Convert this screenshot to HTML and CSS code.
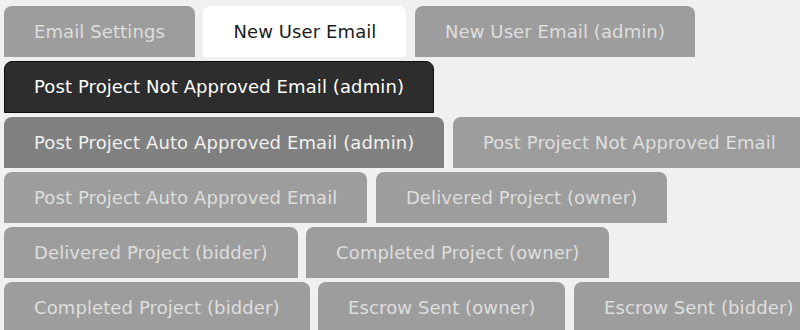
FILE: index.html
```html
<!DOCTYPE html>
<html>
<head>
<meta charset="utf-8">
<link rel="stylesheet" href="styles.css">
</head>
<body>
<div class="tabs">
  <a class="tab">Email Settings</a>
  <a class="tab tab-active">New User Email</a>
  <a class="tab">New User Email (admin)</a>
  <a class="tab tab-dark">Post Project Not Approved Email (admin)</a>
  <a class="tab tab-hover">Post Project Auto Approved Email (admin)</a>
  <a class="tab">Post Project Not Approved Email</a>
  <a class="tab">Post Project Auto Approved Email</a>
  <a class="tab">Delivered Project (owner)</a>
  <a class="tab">Delivered Project (bidder)</a>
  <a class="tab">Completed Project (owner)</a>
  <a class="tab">Completed Project (bidder)</a>
  <a class="tab">Escrow Sent (owner)</a>
  <a class="tab">Escrow Sent (bidder)</a>
</div>
</body>
</html>
```
FILE: styles.css
```css
html, body {
  margin: 0;
  padding: 0;
  overflow: hidden;
  background: #f0f0f0;
}
body {
  font-family: "DejaVu Sans", Verdana, sans-serif;
}
.tabs {
  width: 860px;
  padding: 6px 0 0 4px;
  display: flex;
  flex-wrap: wrap;
  column-gap: 8.5px;
  row-gap: 4px;
}
.tab {
  display: block;
  height: 51px;
  line-height: 51px;
  padding: 0 30px;
  box-sizing: border-box;
  border-radius: 8px 8px 0 0;
  background: #9d9d9d;
  color: #dedede;
  font-size: 18px;
  letter-spacing: 0.1px;
  white-space: nowrap;
}
.tab-active {
  background: #ffffff;
  color: #1a1a1a;
}
.tab-dark {
  background: #2d2d2d;
  color: #ffffff;
  border: 1px solid #0e0e0e;
  height: 52px;
  line-height: 50px;
  padding: 0 29px;
}
.tab-hover {
  background: #808080;
  color: #f0f0f0;
}
```
